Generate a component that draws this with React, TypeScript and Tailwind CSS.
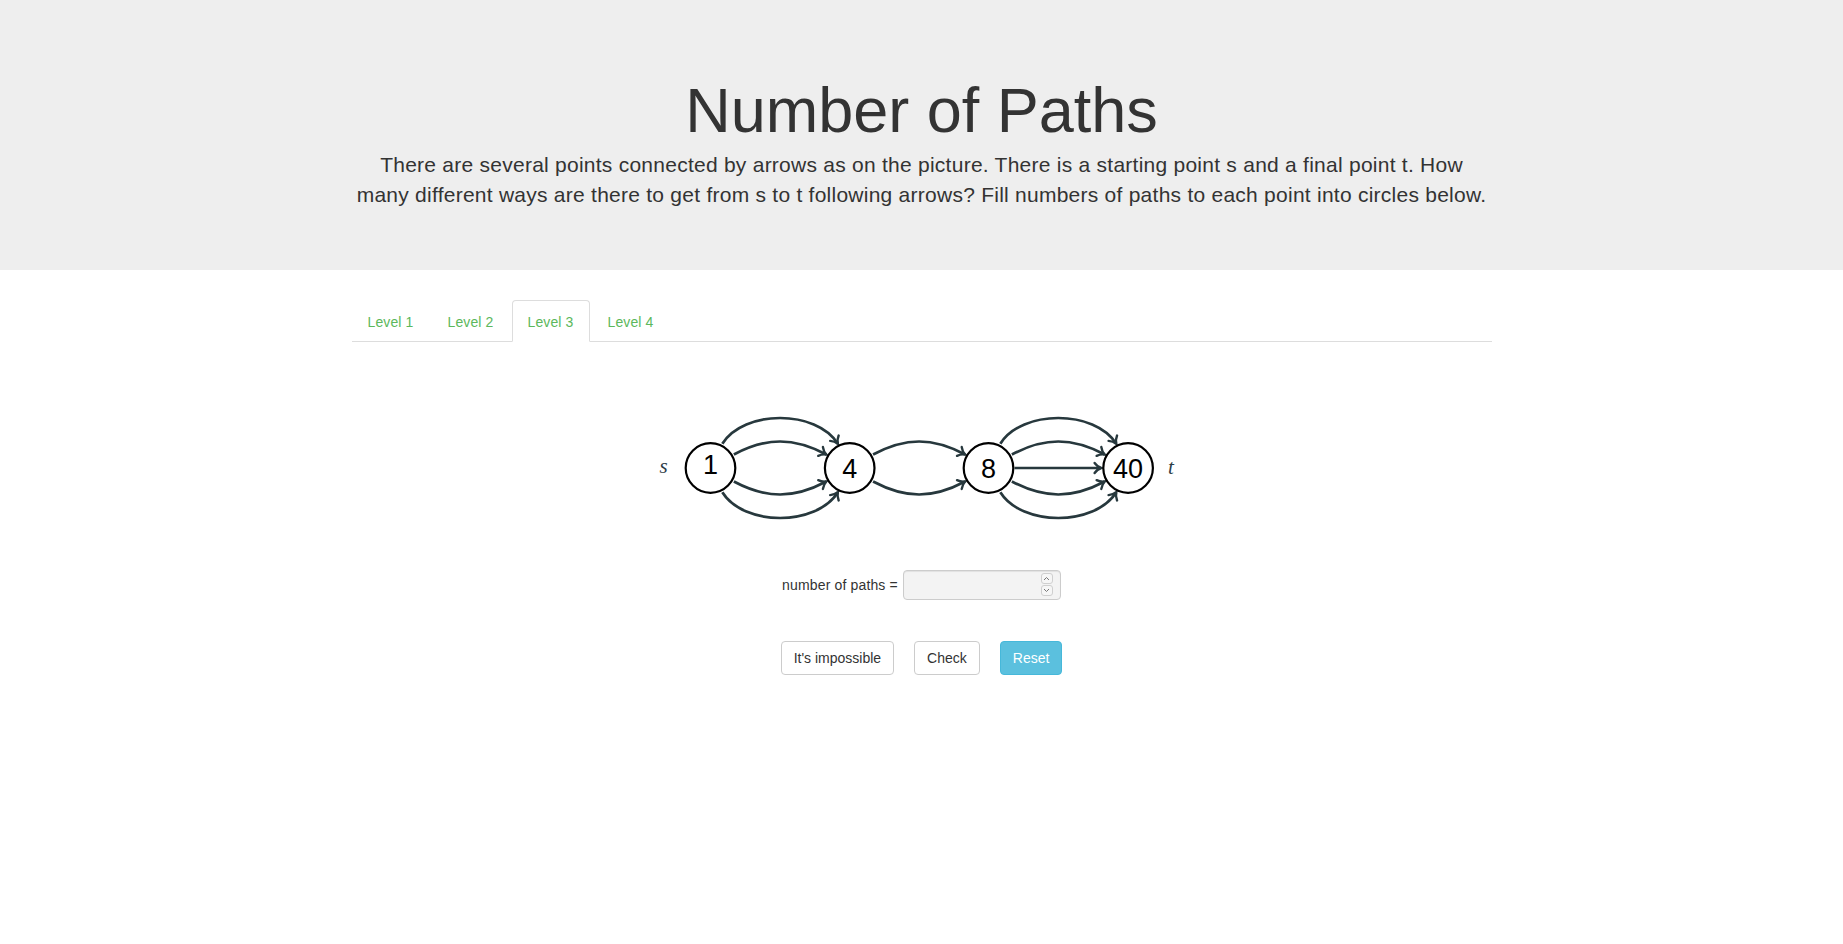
import React from "react";

const NODES = [
  { label: "1", x: 68.5, ty: 84 },
  { label: "4", x: 207.7, ty: 88 },
  { label: "8", x: 346.5, ty: 88 },
  { label: "40", x: 486.1, ty: 88 },
];
const CY = 78;
const R = 27;

type ArcKind = "outer" | "inner";

function arcPath(x1: number, x2: number, kind: ArcKind, sign: number) {
  const a = ((kind === "outer" ? 64 : 30) * Math.PI) / 180;
  const th = ((kind === "outer" ? 58 : 28) * Math.PI) / 180;
  const peak = kind === "outer" ? 50 : 26.5;
  const sx = x1 + R * Math.cos(a);
  const sy = CY + sign * R * Math.sin(a);
  const ex = x2 - R * Math.cos(a);
  const k = (peak - R * Math.sin(a)) / 0.75 / Math.sin(th);
  const dx = k * Math.cos(th);
  const dy = sign * k * Math.sin(th);
  return `M ${sx} ${sy} C ${sx + dx} ${sy + dy}, ${ex - dx} ${sy + dy}, ${ex} ${sy}`;
}

function Graph() {
  const [n1, n4, n8, n40] = NODES.map((n) => n.x);
  const arcs: string[] = [
    arcPath(n1, n4, "outer", -1),
    arcPath(n1, n4, "inner", -1),
    arcPath(n1, n4, "inner", 1),
    arcPath(n1, n4, "outer", 1),
    arcPath(n4, n8, "inner", -1),
    arcPath(n4, n8, "inner", 1),
    arcPath(n8, n40, "outer", -1),
    arcPath(n8, n40, "inner", -1),
    `M ${n8 + 26} ${CY} L ${n40 - R} ${CY}`,
    arcPath(n8, n40, "inner", 1),
    arcPath(n8, n40, "outer", 1),
  ];
  return (
    <svg width="560" height="150" viewBox="0 0 560 150" className="block mx-auto">
      <defs>
        <marker
          id="tip"
          markerUnits="userSpaceOnUse"
          markerWidth="14"
          markerHeight="14"
          refX="0"
          refY="0"
          viewBox="-8 -7 10 14"
          orient="auto"
          overflow="visible"
        >
          <path
            d="M -6.5 -5 C -4.5 -2.2, -2 -0.7, 0 0 C -2 0.7, -4.5 2.2, -6.5 5"
            fill="none"
            stroke="#27383d"
            strokeWidth="2.4"
            strokeLinecap="round"
          />
        </marker>
      </defs>
      {arcs.map((d, i) => (
        <path key={i} d={d} fill="none" stroke="#27383d" strokeWidth="2.7" markerEnd="url(#tip)" />
      ))}
      {NODES.map((n) => (
        <g key={n.label}>
          <circle cx={n.x} cy={CY} r="24.8" fill="#fff" stroke="#000" strokeWidth="2.2" />
          <text
            x={n.x}
            y={n.ty}
            textAnchor="middle"
            fontSize="27"
            fill="#000"
            style={{ fontFamily: '"Liberation Sans", Arial, sans-serif' }}
          >
            {n.label}
          </text>
        </g>
      ))}
      <text
        x="21.5"
        y="83"
        textAnchor="middle"
        fontSize="21"
        fontStyle="italic"
        fill="#2d3d47"
        style={{ fontFamily: '"Liberation Serif", "Times New Roman", serif' }}
      >
        s
      </text>
      <text
        x="529"
        y="84"
        textAnchor="middle"
        fontSize="21"
        fontStyle="italic"
        fill="#2d3d47"
        style={{ fontFamily: '"Liberation Serif", "Times New Roman", serif' }}
      >
        t
      </text>
    </svg>
  );
}

export default function App() {
  const tabs = ["Level 1", "Level 2", "Level 3", "Level 4"];
  return (
    <div className="min-h-screen bg-white text-[#333] font-['Liberation_Sans',Arial,sans-serif] text-[14px]">
      {/* Header */}
      <div className="bg-[#eee] h-[270px] pt-[76px] box-border">
        <div className="w-[1140px] mx-auto text-center">
          <h1 className="text-[63px] leading-[1.1] font-normal text-[#333] mb-[5px]">Number of Paths</h1>
          <p className="text-[21px] leading-[1.4] tracking-[0.25px] text-[#333]">
            There are several points connected by arrows as on the picture. There is a starting point s and a final point t. How many different ways are there to get from s to t following arrows? Fill numbers of paths to each point into circles below.
          </p>
        </div>
      </div>

      <div className="w-[1140px] mx-auto pt-[30px]">
        {/* Tabs */}
        <ul className="flex border-b border-[#ddd]">
          {tabs.map((t) => (
            <li key={t} className="mr-[2px] -mb-px">
              <a
                className={
                  t === "Level 3"
                    ? "block px-[15px] pt-[11px] pb-[9px] leading-[20px] tracking-[0.12px] text-[#5cb85c] bg-white border border-[#ddd] border-b-transparent rounded-t-[4px] cursor-default"
                    : "block px-[15px] pt-[11px] pb-[9px] leading-[20px] tracking-[0.12px] text-[#5cb85c] border border-transparent rounded-t-[4px] cursor-pointer"
                }
              >
                {t}
              </a>
            </li>
          ))}
        </ul>

        {/* Graph */}
        <div className="mt-[48px]">
          <Graph />
        </div>

        {/* Answer */}
        <div className="mt-[30px] flex items-center justify-center gap-[5px]">
          <label className="text-[14px] tracking-[0.15px] text-[#333]">number of paths =</label>
          <div className="relative">
            <input
              type="text"
              readOnly
              className="w-[158px] h-[30px] bg-[#f3f3f3] border border-[#ccc] rounded-[4px] px-[10px] outline-none shadow-[inset_0_1px_1px_rgba(0,0,0,0.075)]"
            />
            <div className="absolute right-[8px] top-[3px] flex flex-col gap-[1px]">
              <span className="w-[12px] h-[11px] border border-[#cfcfcf] rounded-[3px] bg-[#f6f6f6] flex items-center justify-center">
                <svg width="7" height="5" viewBox="0 0 7 5">
                  <path d="M1 4 L3.5 1.5 L6 4" fill="none" stroke="#777" strokeWidth="1" />
                </svg>
              </span>
              <span className="w-[12px] h-[11px] border border-[#cfcfcf] rounded-[3px] bg-[#f6f6f6] flex items-center justify-center">
                <svg width="7" height="5" viewBox="0 0 7 5">
                  <path d="M1 1 L3.5 3.5 L6 1" fill="none" stroke="#777" strokeWidth="1" />
                </svg>
              </span>
            </div>
          </div>
        </div>

        {/* Buttons */}
        <div className="mt-[41px] flex justify-center gap-[20px]">
          <button className="px-[12px] py-[6px] leading-[20px] text-[14px] bg-white text-[#333] border border-[#ccc] rounded-[4px]">
            It's impossible
          </button>
          <button className="px-[12px] py-[6px] leading-[20px] text-[14px] bg-white text-[#333] border border-[#ccc] rounded-[4px]">
            Check
          </button>
          <button className="px-[12px] py-[6px] leading-[20px] text-[14px] bg-[#5bc0de] text-white border border-[#46b8da] rounded-[4px]">
            Reset
          </button>
        </div>
      </div>
    </div>
  );
}
